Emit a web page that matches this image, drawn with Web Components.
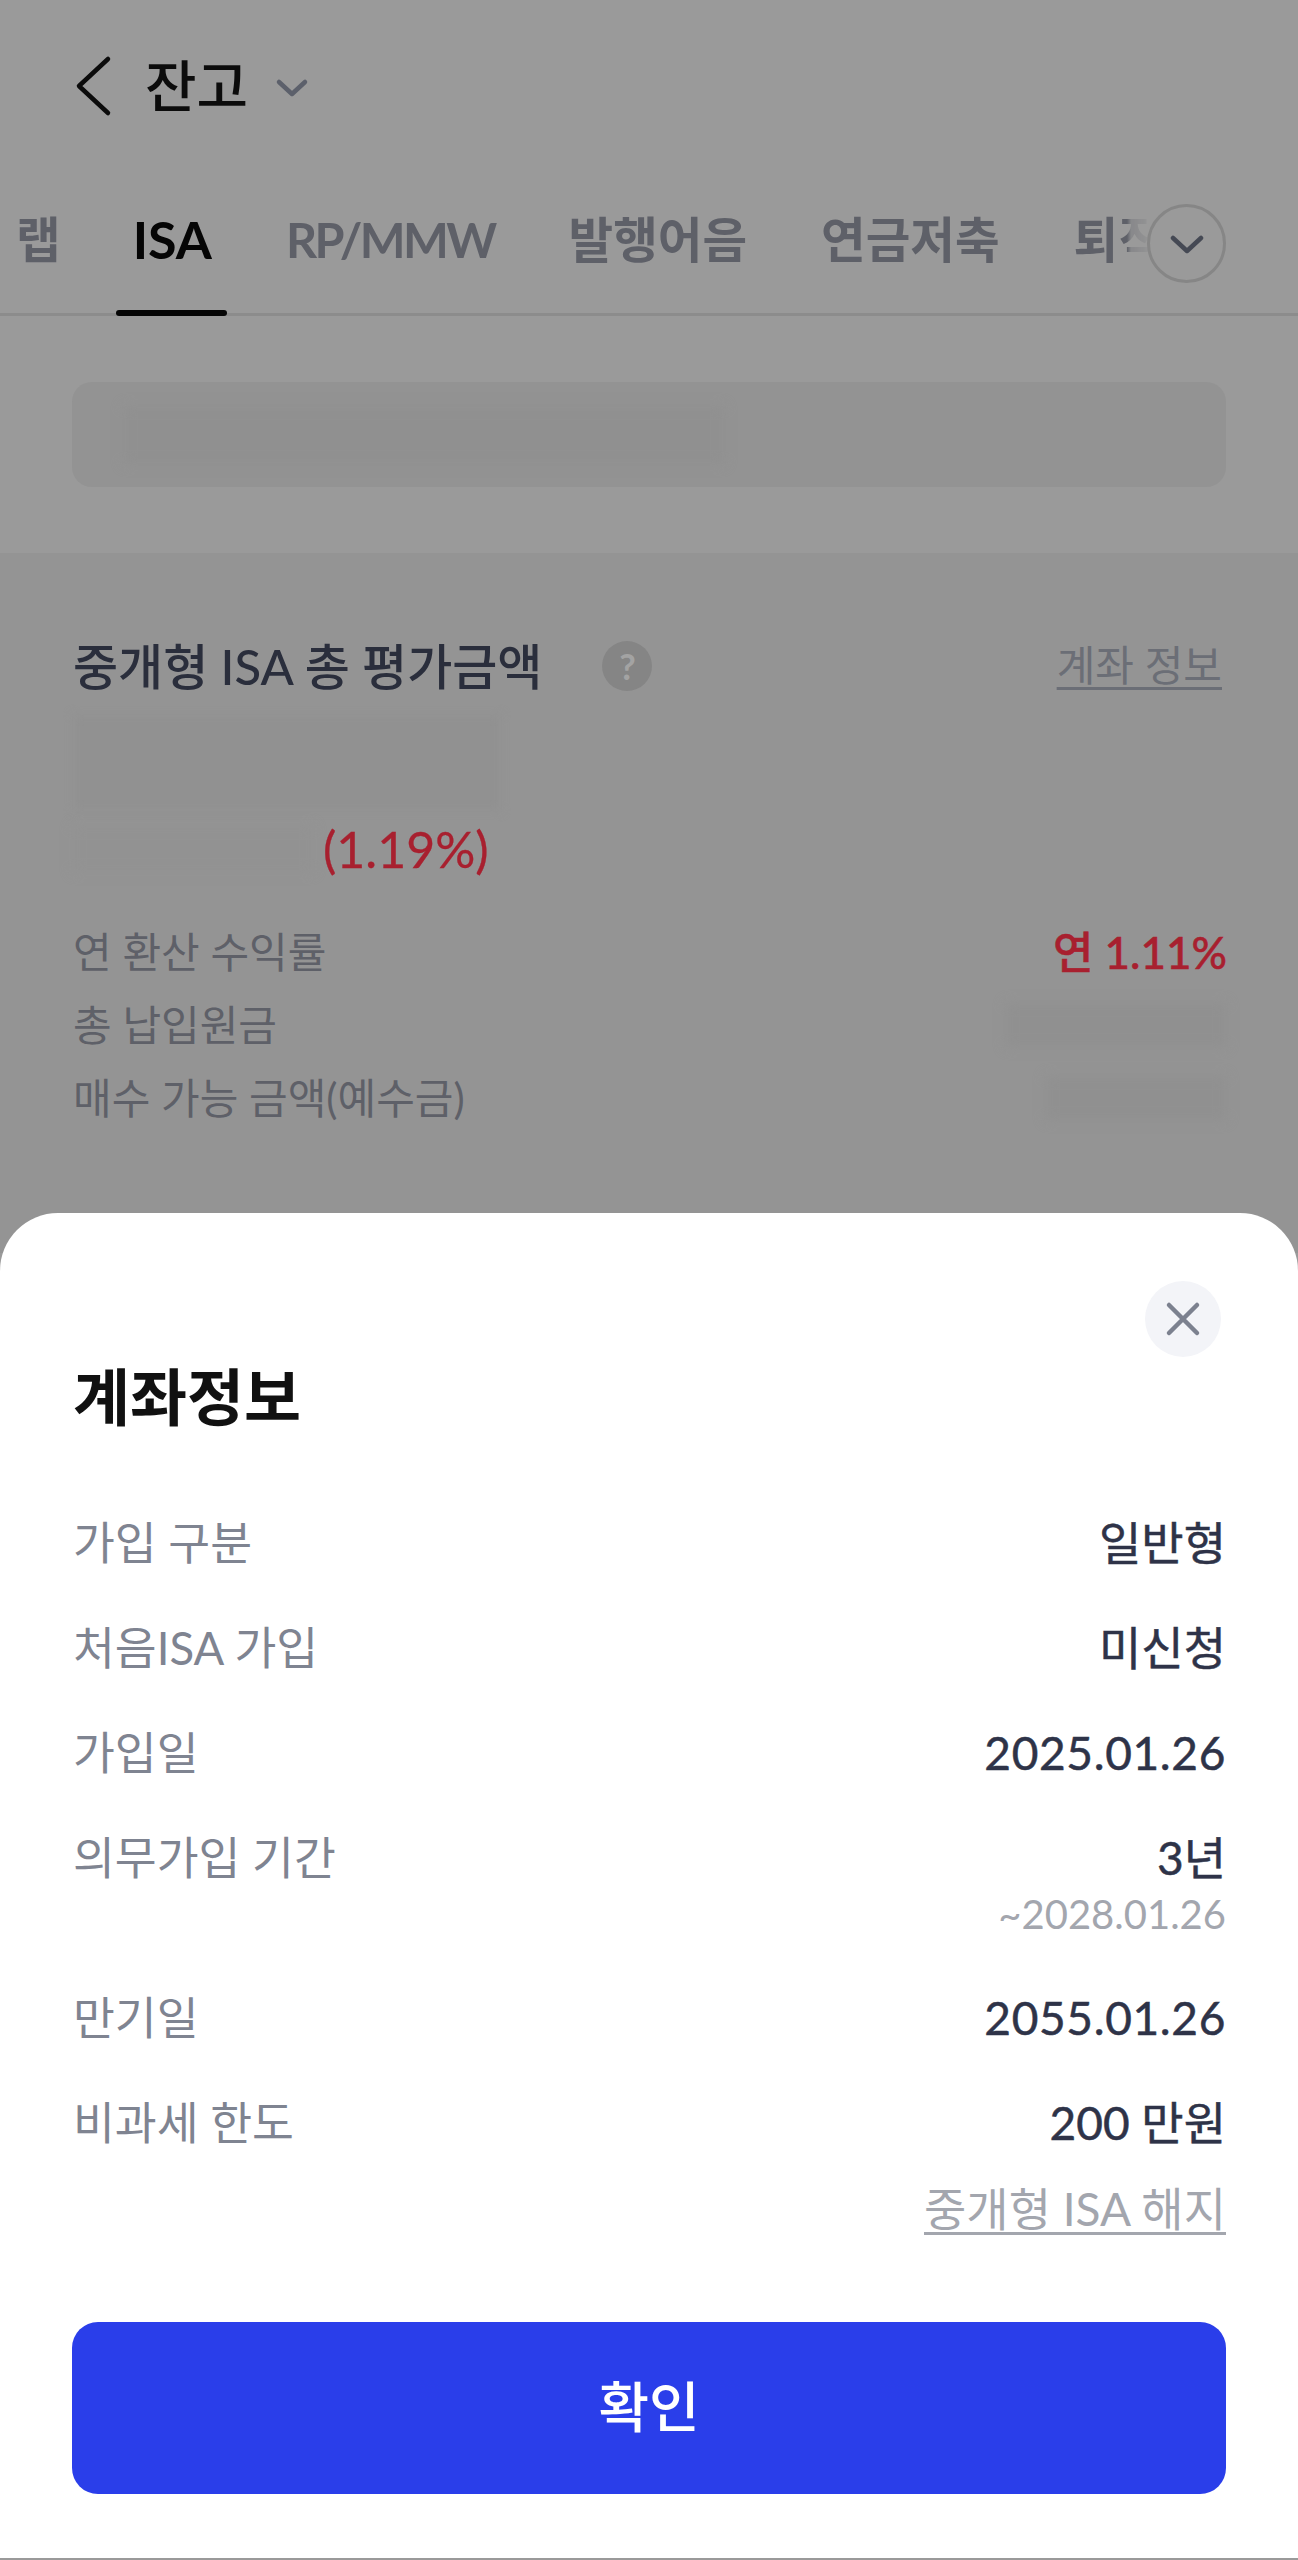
<!DOCTYPE html>
<html lang="ko">
<head>
<meta charset="utf-8">
<title>잔고</title>
<style>
  html, body { margin: 0; padding: 0; background: #9a9a9a; }
  body { font-family: Lato, "Noto Sans CJK KR", sans-serif; }
</style>
</head>
<body>
<balance-page>
  <top-bar title="잔고"></top-bar>
  <tab-strip></tab-strip>
  <notice-box></notice-box>
  <isa-summary></isa-summary>
  <bottom-sheet title="계좌정보">
    <info-row label="가입 구분" value="일반형"></info-row>
    <info-row label="처음ISA 가입" value="미신청"></info-row>
    <info-row label="가입일" value="2025.01.26"></info-row>
    <info-row label="의무가입 기간" value="3년" sub="~2028.01.26"></info-row>
    <info-row label="만기일" value="2055.01.26"></info-row>
    <info-row label="비과세 한도" value="200 만원"></info-row>
  </bottom-sheet>
</balance-page>

<script>
class BalancePage extends HTMLElement {
    constructor(){
        super();
        this.attachShadow({mode:"open"});
        this.shadowRoot.innerHTML = `
        <style>
            :host{
                display:block;
                position:relative;
                width:1298px;
                height:2560px;
                overflow:hidden;
                background:#9a9a9a;
                font-family:Lato,"Noto Sans CJK KR",sans-serif;
            }
        </style>
        <slot></slot>`;
    }
}
customElements.define('balance-page', BalancePage);

class TopBar extends HTMLElement {
    constructor(){
        super();
        this.attachShadow({mode:"open"});
    }
    connectedCallback(){
        this.shadowRoot.innerHTML = `
        <style>
            :host{
                display:flex;
                align-items:center;
                height:172px;
                padding:0 0 0 72px;
                box-sizing:border-box;
                color:#0c0c0c;
            }
            .back{ width:44px; height:64px; }
            h1{
                margin:0 0 0 29px;
                font-size:56px;
                font-weight:500;
                line-height:64px;
            }
            .down{ width:36px; height:22px; margin:6px 0 0 26px; }
        </style>
        <svg class="back" viewBox="0 0 44 64" fill="none" stroke="#0c0c0c" stroke-width="4.5" stroke-linecap="round" stroke-linejoin="round"><path d="M36 5 L7 32 L36 59"/></svg>
        <h1>${this.getAttribute('title')}</h1>
        <svg class="down" viewBox="0 0 36 22" fill="none" stroke="#5c606b" stroke-width="4.5" stroke-linecap="round" stroke-linejoin="round"><path d="M5 4 L18 16 L31 4"/></svg>`;
    }
}
customElements.define('top-bar', TopBar);

class TabStrip extends HTMLElement {
    constructor(){
        super();
        this.attachShadow({mode:"open"});
    }
    connectedCallback(){
        const tabs = ['랩','ISA','RP/MMW','발행어음','연금저축','퇴직연금'];
        this.shadowRoot.innerHTML = `
        <style>
            :host{
                display:block;
                position:relative;
                height:144px;
                box-sizing:border-box;
                border-bottom:3px solid #8c8c8c;
            }
            .list{
                display:flex;
                gap:74px;
                padding:0 0 0 16px;
                height:144px;
                overflow:hidden;
                width:1150px;
                box-sizing:border-box;
                -webkit-mask-image:linear-gradient(to right,#000 1127px,rgba(0,0,0,.3) 1131px,rgba(0,0,0,.15) 1145px,transparent 1150px);
                mask-image:linear-gradient(to right,#000 1127px,rgba(0,0,0,.3) 1131px,rgba(0,0,0,.15) 1145px,transparent 1150px);
            }
            .tab{
                position:relative;
                flex:none;
                height:100%;
                font-size:48.5px;
                font-weight:700;
                line-height:134px;
                color:#5e6068;
            }
            .tab:first-child{ margin-right:-2px; }
            .tab.latin{ letter-spacing:-2.6px; }
            .tab.on{
                color:#050505;
                font-size:52px;
            }
            .tab.on::after{
                content:"";
                position:absolute;
                left:-17px;
                right:-15px;
                bottom:0;
                height:6px;
                border-radius:3px;
                background:#060606;
            }
            .more{
                position:absolute;
                left:1147px;
                top:32px;
                width:79px;
                height:79px;
                box-sizing:border-box;
                border:3px solid #868686;
                border-radius:50%;
                display:flex;
                align-items:center;
                justify-content:center;
            }
            .more svg{ width:34px; height:22px; margin-top:2px; }
        </style>
        <div class="list">
            ${tabs.map(t => `<span class="tab ${t==='ISA'?'on':''} ${t==='RP/MMW'?'latin':''}">${t}</span>`).join('')}
        </div>
        <div class="more">
            <svg viewBox="0 0 34 22" fill="none" stroke="#454954" stroke-width="4.5" stroke-linecap="round" stroke-linejoin="round"><path d="M3 4 L17 17 L31 4"/></svg>
        </div>`;
    }
}
customElements.define('tab-strip', TabStrip);

class NoticeBox extends HTMLElement {
    constructor(){
        super();
        this.attachShadow({mode:"open"});
        this.shadowRoot.innerHTML = `
        <style>
            :host{
                display:block;
                height:237px;
                padding:66px 72px 0;
                box-sizing:border-box;
            }
            .box{
                height:105px;
                border-radius:20px;
                background:#939393;
                padding:24px 52px;
                box-sizing:border-box;
            }
            .smear{
                width:600px;
                height:58px;
                background:#909090;
                filter:blur(6px);
            }
        </style>
        <div class="box"><div class="smear"></div></div>`;
    }
}
customElements.define('notice-box', NoticeBox);

class IsaSummary extends HTMLElement {
    constructor(){
        super();
        this.attachShadow({mode:"open"});
        this.shadowRoot.innerHTML = `
        <style>
            :host{
                display:block;
                height:700px;
                background:#949494;
                padding:88px 72px 0 73px;
                box-sizing:border-box;
            }
            .head{
                display:flex;
                align-items:center;
                height:50px;
            }
            h2{
                margin:0;
                font-size:49px;
                font-weight:500;
                line-height:50px;
                color:#2a2e3c;
                white-space:nowrap;
            }
            .help{
                width:50px;
                height:50px;
                margin-left:60px;
                border-radius:50%;
                background:#858585;
                color:#a3a3a3;
                font-size:36px;
                font-weight:700;
                line-height:50px;
                text-align:center;
            }
            .link{
                margin:-3px 4px 0 auto;
                font-size:42px;
                line-height:56px;
                color:#6b6e76;
                text-decoration:underline;
                text-decoration-thickness:3px;
                text-underline-offset:6px;
                white-space:nowrap;
            }
            .amount{
                width:428px;
                height:96px;
                margin-top:24px;
                background:#919191;
                filter:blur(5px);
            }
            .change{
                display:flex;
                align-items:center;
                height:56px;
                margin-top:10px;
            }
            .change .smear{
                width:240px;
                height:46px;
                background:#929292;
                filter:blur(6px);
            }
            .change .pct{
                margin-left:10px;
                font-size:50px;
                line-height:56px;
                color:#a8202f;
                -webkit-text-stroke:.3px #a8202f;
            }
            .rows{
                display:flex;
                flex-direction:column;
                gap:17px;
                margin-top:47px;
            }
            .row{
                display:flex;
                justify-content:space-between;
                align-items:center;
                height:56px;
                font-size:42px;
                line-height:56px;
                color:#5e6068;
            }
            .red{ color:#a8202f; font-weight:500; font-size:44px; margin-right:-1px; -webkit-text-stroke:.5px #a8202f; }
            .blur{
                height:44px;
                background:#909090;
                filter:blur(6px);
            }
        </style>
        <div class="head">
            <h2>중개형 ISA 총 평가금액</h2>
            <div class="help">?</div>
            <span class="link">계좌 정보</span>
        </div>
        <div class="amount"></div>
        <div class="change"><div class="smear"></div><span class="pct">(1.19%)</span></div>
        <div class="rows">
            <div class="row"><span>연 환산 수익률</span><span class="red">연 1.11%</span></div>
            <div class="row"><span>총 납입원금</span><div class="blur" style="width:220px"></div></div>
            <div class="row"><span>매수 가능 금액(예수금)</span><div class="blur" style="width:180px"></div></div>
        </div>`;
    }
}
customElements.define('isa-summary', IsaSummary);

class BottomSheet extends HTMLElement {
    constructor(){
        super();
        this.attachShadow({mode:"open"});
    }
    connectedCallback(){
        this.shadowRoot.innerHTML = `
        <style>
            :host{
                display:block;
                position:absolute;
                left:0;
                right:0;
                top:1213px;
                bottom:2px;
                background:#fff;
                border-radius:58px 58px 0 0;
                padding:0 72px;
                box-sizing:border-box;
            }
            .close-line{
                display:flex;
                justify-content:flex-end;
                padding:68px 0 0;
                margin-right:5px;
            }
            .close{
                width:76px;
                height:76px;
                border-radius:50%;
                background:#f3f4f8;
                display:flex;
                align-items:center;
                justify-content:center;
            }
            .close svg{ width:36px; height:36px; }
            h3{
                margin:5px 0 0 1px;
                height:70px;
                font-size:62px;
                font-weight:700;
                line-height:70px;
                color:#111;
            }
            .list{
                display:flex;
                flex-direction:column;
                gap:47px;
                margin-top:82px;
            }
            .cancel{
                margin-top:29px;
                text-align:right;
                font-size:46px;
                line-height:56px;
                color:#a3a6ae;
                text-decoration:underline;
                text-decoration-thickness:3px;
                text-underline-offset:6px;
            }
            .ok{
                display:flex;
                align-items:center;
                justify-content:center;
                height:172px;
                margin-top:85px;
                padding-bottom:10px;
                box-sizing:border-box;
                border-radius:26px;
                background:#2a3eea;
                color:#fff;
                font-size:55px;
                font-weight:500;
            }
        </style>
        <div class="close-line">
            <div class="close">
                <svg viewBox="0 0 36 36" fill="none" stroke="#7c818f" stroke-width="4.5" stroke-linecap="round"><path d="M4 4 L32 32 M32 4 L4 32"/></svg>
            </div>
        </div>
        <h3>${this.getAttribute('title')}</h3>
        <div class="list"><slot></slot></div>
        <div class="cancel">중개형 ISA 해지</div>
        <div class="ok">확인</div>`;
    }
}
customElements.define('bottom-sheet', BottomSheet);

class InfoRow extends HTMLElement {
    constructor(){
        super();
        this.attachShadow({mode:"open"});
    }
    connectedCallback(){
        const sub = this.getAttribute('sub');
        const value = this.getAttribute('value');
        const isDate = /^\d{4}\./.test(value);
        this.shadowRoot.innerHTML = `
        <style>
            :host{
                display:flex;
                justify-content:space-between;
                align-items:flex-start;
                font-size:45.5px;
                line-height:58px;
            }
            .label{ color:#7f8491; margin-left:1px; }
            .right{ text-align:right; }
            .value{ color:#2e3348; font-size:46px; font-weight:400; -webkit-text-stroke:.5px #2e3348; }
            .value.date{ letter-spacing:.65px; }
            .sub{ color:#a3a6ae; font-size:40px; line-height:55px; }
        </style>
        <span class="label">${this.getAttribute('label')}</span>
        <div class="right">
            <div class="value ${isDate?'date':''}">${value}</div>
            ${sub ? `<div class="sub">${sub}</div>` : ''}
        </div>`;
    }
}
customElements.define('info-row', InfoRow);
</script>
</body>
</html>
